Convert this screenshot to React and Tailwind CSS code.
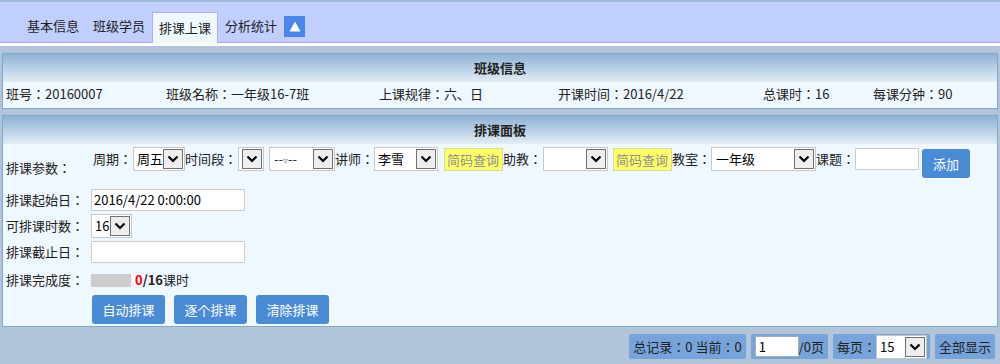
const font = { fontFamily: '"Noto Sans CJK JP", "Noto Sans CJK SC", "Liberation Sans", sans-serif' };

function Arrow() {
    return (
        <span className="flex h-[20px] w-[20px] shrink-0 items-center justify-center border border-[#707070] bg-[#eeeeee]">
            <svg width="12" height="8" viewBox="0 0 12 8">
                <path d="M1.5 1.5 L6 6 L10.5 1.5" fill="none" stroke="#000" strokeWidth="2.2" />
            </svg>
        </span>
    );
}

function Select({ w, value, className = "" }) {
    return (
        <span
            className={`flex h-[24px] shrink-0 items-center justify-between border border-[#c8c8c8] bg-white pl-[3px] pr-[1px] text-[13px] text-black ${className}`}
            style={{ width: w }}
        >
            <span className="whitespace-nowrap">{value}</span>
            <Arrow />
        </span>
    );
}

function Input({ w, value = "", className = "" }) {
    return (
        <span
            className={`flex h-[22px] shrink-0 items-center border border-[#cccccc] bg-white px-[2px] text-[13px] text-black ${className}`}
            style={{ width: w }}
        >
            {value}
        </span>
    );
}

function Lookup({ className = "" }) {
    return (
        <span className={`mt-[1px] flex h-[23px] w-[59px] shrink-0 items-center border border-[#d8d8a0] bg-[#ffff66] pl-[2px] text-[13px] text-[#909090] ${className}`}>
            简码查询
        </span>
    );
}

function Label({ children, className = "" }) {
    return <span className={`flex h-[24px] shrink-0 items-center whitespace-nowrap ${className}`}>{children}</span>;
}

function BlueBtn({ children, className = "" }) {
    return (
        <span className={`flex h-[29px] items-center justify-center rounded-[3px] bg-[#4a8bd6] text-[13px] text-white ${className}`}>
            {children}
        </span>
    );
}

function PanelHead({ title }) {
    return (
        <div className="flex h-[28px] items-center justify-center bg-gradient-to-b from-[#8eb2d6] to-[#e3edf5] text-[13px] font-bold text-[#222]">
            {title}
        </div>
    );
}

export default function App() {
    const tabs = ["基本信息", "班级学员", "排课上课", "分析统计"];
    return (
        <div className="h-[364px] w-[1000px] overflow-hidden bg-[#b1c4d9] text-[13px] text-[#222]" style={font}>
            {/* tab bar */}
            <div className="h-[2px] bg-[#9fb9d6]" />
            <div className="flex h-[41px] items-end border-b border-[#aba3f6] bg-[#c0cffd] pl-[20px]">
                {tabs.map((t) => (
                    <span
                        key={t}
                        className={
                            t === "排课上课"
                                ? "-mb-px flex h-[31px] items-center border border-b-0 border-[#b6aaf8] bg-[#f0f8ff] px-[6px] text-[#222]"
                                : "flex h-[31px] items-center px-[7px] pb-[1px] text-[#222]"
                        }
                    >
                        {t}
                    </span>
                ))}
                <span className="mb-[5px] flex h-[21px] w-[21px] items-center justify-center bg-[#4a86ee]">
                    <svg width="12" height="11" viewBox="0 0 12 11">
                        <path d="M6 0.5 L11.5 10.5 L0.5 10.5 Z" fill="#fff" />
                    </svg>
                </span>
            </div>
            <div className="h-[3px] bg-white" />

            {/* class info */}
            <div className="mx-[2px] mt-[7px] border border-[#7eaac8] bg-[#f0f8ff]">
                <PanelHead title="班级信息" />
                <div className="flex h-[26px] items-center pl-[3px] pb-[2px]">
                    <span className="w-[160px]">班号：20160007</span>
                    <span className="w-[213px]">班级名称：一年级16-7班</span>
                    <span className="w-[179px]">上课规律：六、日</span>
                    <span className="w-[205px]">开课时间：2016/4/22</span>
                    <span className="w-[110px]">总课时：16</span>
                    <span>每课分钟：90</span>
                </div>
            </div>

            {/* schedule panel */}
            <div className="mx-[2px] mt-[6px] border border-[#7eaac8] bg-[#f0f8ff]">
                <PanelHead title="排课面板" />
                <div className="flex items-start pl-[3px] pt-[3px]">
                    <span className="mt-[11px] w-[87px] shrink-0">排课参数：</span>
                    <div className="flex items-start">
                        <Label className="w-[40px]">周期：</Label>
                        <Select w={52} value="周五" />
                        <Label className="w-[52px]">时间段：</Label>
                        <Select w={26} value="" className="ml-[1px] pl-[1px]" />
                        <Select
                            w={66}
                            value={
                                <span className="text-[#333]">
                                    --<span className="text-[10px] text-[#888]">▿</span>--
                                </span>
                            }
                            className="ml-[5px] pl-[4px]"
                        />
                        <Label className="w-[39px]">讲师：</Label>
                        <Select w={64} value="李雪" />
                        <Lookup className="ml-[6px]" />
                        <Label className="w-[40px]">助教：</Label>
                        <Select w={65} value="" />
                        <Lookup className="ml-[5px]" />
                        <Label className="w-[39px]">教室：</Label>
                        <Select w={105} value="一年级" className="pl-[4px]" />
                        <Label className="w-[39px]">课题：</Label>
                        <Input w={64} className="mt-[1px]" />
                        <BlueBtn className="ml-[3px] mt-[2px] w-[48px]">添加</BlueBtn>
                    </div>
                </div>
                <div className="mt-[11px] flex flex-col gap-[4px] pl-[3px]">
                    <div className="flex h-[22px] items-center">
                        <span className="w-[85px]">排课起始日：</span>
                        <Input w={154} value="2016/4/22 0:00:00" />
                    </div>
                    <div className="flex h-[22px] items-center">
                        <span className="w-[85px]">可排课时数：</span>
                        <Select w={41} value="16" className="h-[22px] pl-[2px]" />
                    </div>
                    <div className="flex h-[22px] items-center">
                        <span className="w-[85px]">排课截止日：</span>
                        <Input w={154} />
                    </div>
                    <div className="mt-[2px] flex h-[22px] items-center">
                        <span className="w-[85px]">排课完成度：</span>
                        <span className="h-[13px] w-[40px] bg-[#cccccc]" />
                        <span className="ml-[4px]">
                            <b className="text-[#ff0000]">0</b>
                            <b>/16</b>课时
                        </span>
                    </div>
                </div>
                <div className="mb-[2px] mt-[4px] flex gap-[9px] pl-[89px]">
                    <BlueBtn className="w-[73px]">自动排课</BlueBtn>
                    <BlueBtn className="w-[73px]">逐个排课</BlueBtn>
                    <BlueBtn className="w-[73px]">清除排课</BlueBtn>
                </div>
            </div>

            {/* pager */}
            <div className="mt-[7px] flex justify-end gap-[5px] pr-[5px]">
                <span className="flex h-[25px] items-center rounded-[2px] bg-[#76a3da] px-[4px]">总记录：0 当前：0</span>
                <span className="flex h-[25px] items-center rounded-[2px] bg-[#76a3da] px-[4px]">
                    <span className="flex h-[21px] w-[44px] items-center border border-[#aaa] bg-white px-[3px] text-black">1</span>
                    <span>/0页</span>
                </span>
                <span className="flex h-[25px] items-center rounded-[2px] bg-[#76a3da] pl-[4px] pr-[3px]">
                    每页：
                    <Select w={51} value="15" className="h-[22px] text-[#222]" />
                </span>
                <span className="flex h-[25px] items-center rounded-[2px] bg-[#76a3da] px-[4px]">全部显示</span>
            </div>
        </div>
    );
}
